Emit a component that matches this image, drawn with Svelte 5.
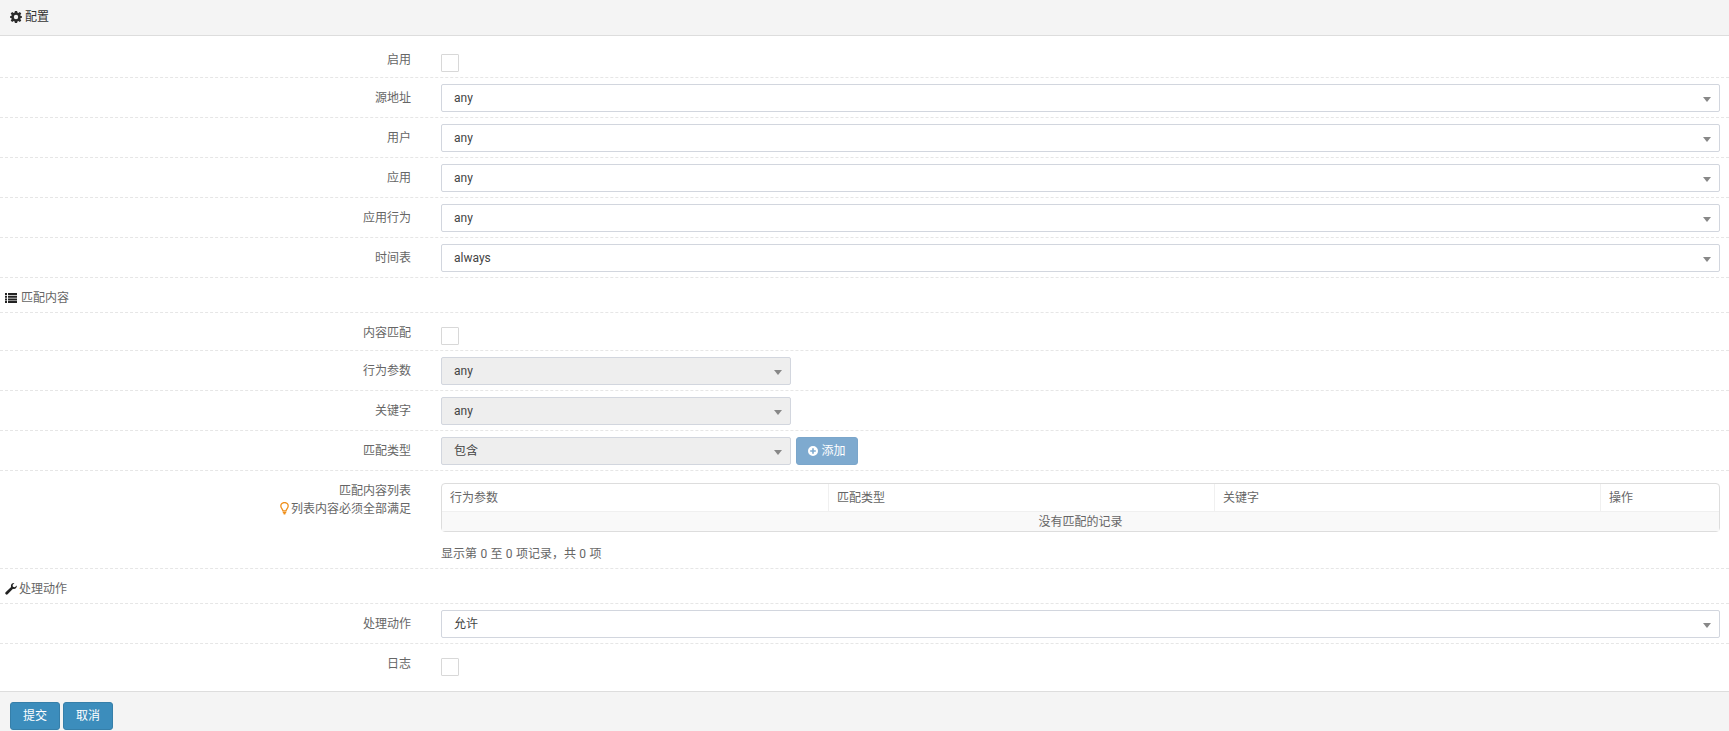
<script>
  const topFields = [
    { label: "源地址", value: "any" },
    { label: "用户", value: "any" },
    { label: "应用", value: "any" },
    { label: "应用行为", value: "any" },
    { label: "时间表", value: "always" }
  ];
  const columns = ["行为参数", "匹配类型", "关键字", "操作"];
</script>

{#snippet select(value, disabled = false, short = false)}
  <div class="select" class:disabled class:short>
    <span>{value}</span>
    <i class="arrow"></i>
  </div>
{/snippet}

<div class="page">
  <header class="head">
    <svg class="icon" viewBox="0 0 12 12" aria-hidden="true">
      <path fill="#2b2b2b" fill-rule="evenodd" d="M4.9 0h2.2l.3 1.6 1 .4L9.8 1l1.5 1.5-1 1.4.4 1 1.6.3v1.6l-1.6.3-.4 1 1 1.4-1.5 1.5-1.4-1-1 .4-.3 1.6H4.9l-.3-1.6-1-.4-1.4 1L.7 9.5l1-1.4-.4-1L0 6.8V5.2l1.3-.3.4-1-1-1.4L2.2 1l1.4 1 1-.4zM6 3.8a2.2 2.2 0 1 0 0 4.4 2.2 2.2 0 0 0 0-4.4z" />
    </svg>
    <span>配置</span>
  </header>

  <form class="body">
    <div class="row check">
      <div class="label">启用</div>
      <div class="field"><span class="checkbox"></span></div>
    </div>
    {#each topFields as f}
      <div class="row">
        <div class="label">{f.label}</div>
        <div class="field">{@render select(f.value)}</div>
      </div>
    {/each}

    <div class="section">
      <svg class="icon list" viewBox="0 0 12 10" aria-hidden="true">
        <path fill="#222" d="M0 0h2v2H0zM3 0h9v2H3zM0 2.700h2v2H0zM3 2.700h9v2H3zM0 5.400h2v2H0zM3 5.400h9v2H3zM0 8h2v2H0zM3 8h9v2H3z" />
      </svg>
      <span>匹配内容</span>
    </div>

    <div class="row check">
      <div class="label">内容匹配</div>
      <div class="field"><span class="checkbox"></span></div>
    </div>
    <div class="row">
      <div class="label">行为参数</div>
      <div class="field">{@render select("any", true, true)}</div>
    </div>
    <div class="row">
      <div class="label">关键字</div>
      <div class="field">{@render select("any", true, true)}</div>
    </div>
    <div class="row">
      <div class="label">匹配类型</div>
      <div class="field inline">
        {@render select("包含", true, true)}
        <button type="button" class="btn add">
          <svg class="plus" viewBox="0 0 10 10" aria-hidden="true">
            <path fill="#fff" fill-rule="evenodd" d="M5 0a5 5 0 1 1 0 10A5 5 0 0 1 5 0zM4.200 2.200v2H2.200v1.600h2v2h1.600v-2h2V4.200h-2v-2z" />
          </svg>添加
        </button>
      </div>
    </div>
    <div class="row table-row">
      <div class="label">
        匹配内容列表
        <div class="hint">
          <svg class="bulb" viewBox="0 0 8 12" aria-hidden="true">
            <path fill="none" stroke="#ef8f1a" stroke-width="1.200" d="M2.600 8.200C2.400 6.600.6 5.800.6 3.600a3.400 3.100 0 0 1 6.800 0c0 2.200-1.800 3-2 4.600z" />
            <path fill="#ef8f1a" d="M2.400 9h3.200v1.200l-.8.5v.9H3.200v-.9l-.8-.5z" />
          </svg>列表内容必须全部满足
        </div>
      </div>
      <div class="field">
        <table>
          <thead>
            <tr>
              {#each columns as c}
                <th>{c}</th>
              {/each}
            </tr>
          </thead>
          <tbody>
            <tr><td colspan="4">没有匹配的记录</td></tr>
          </tbody>
        </table>
        <p class="info">显示第 0 至 0 项记录，共 0 项</p>
      </div>
    </div>

    <div class="section">
      <svg class="icon wrench" viewBox="0 0 12 12" aria-hidden="true">
        <path fill="#222" d="M11.800 2.600c.3 1.600-.9 3.400-2.800 3.400-.4 0-.7 0-1-.2l-5.400 5.500c-.5.5-1.300.5-1.800 0l-.2-.2c-.5-.5-.5-1.300 0-1.800L6.100 4c-.1-.3-.2-.7-.2-1C5.900 1 7.700-.2 9.400.1L7.600 1.900l.3 1.900 1.900.4z" />
      </svg>
      <span>处理动作</span>
    </div>

    <div class="row">
      <div class="label">处理动作</div>
      <div class="field">{@render select("允许")}</div>
    </div>
    <div class="row check last">
      <div class="label">日志</div>
      <div class="field"><span class="checkbox"></span></div>
    </div>
  </form>

  <footer class="foot">
    <button type="button" class="btn">提交</button>
    <button type="button" class="btn">取消</button>
  </footer>
</div>

<style>
  :global(body) {
    background: #fff;
  }

  .page {
    font-family: Roboto, "Noto Sans CJK SC", sans-serif;
    font-size: 12px;
    line-height: 18px;
    color: #666;
    height: 731px;
    overflow: hidden;
  }

  .head {
    height: 33px;
    padding-bottom: 2px;
    background: #f4f4f4;
    border-bottom: 1px solid #ddd;
    display: flex;
    align-items: center;
    gap: 3px;
    padding-left: 10px;
    color: #333;
  }

  .icon {
    width: 12px;
    height: 12px;
    flex: none;
  }

  .body {
    padding: 4px 0 10px;
  }

  .row {
    display: grid;
    grid-template-columns: 411px 1fr;
    column-gap: 30px;
    padding-right: 9px;
    min-height: 39px;
    border-bottom: 1px dashed #e6e6e6;
  }

  .row.check {
    min-height: 37px;
  }

  .row.last {
    border-bottom: 0;
  }

  .label {
    text-align: right;
    padding-top: 11px;
  }

  .field {
    padding-top: 6px;
    padding-bottom: 5px;
  }

  .check .field {
    padding-top: 14px;
    padding-bottom: 5px;
  }

  .inline {
    display: flex;
    gap: 5px;
  }

  .checkbox {
    display: block;
    width: 16px;
    height: 16px;
    border: 1px solid #d8d8d8;
    border-radius: 1px;
  }

  .select {
    height: 26px;
    border: 1px solid #d2d6de;
    border-radius: 2px;
    display: flex;
    align-items: center;
    justify-content: space-between;
    padding: 0 8px 0 12px;
    color: #444;
    background: #fff;
  }

  .select.disabled {
    background: #eee;
  }

  .select.short {
    width: 328px;
    flex: none;
  }

  .arrow {
    width: 0;
    height: 0;
    border-left: 4px solid transparent;
    border-right: 4px solid transparent;
    border-top: 5px solid #888;
    margin-top: 2px;
  }

  .btn {
    font: inherit;
    color: #fff;
    height: 28px;
    width: 50px;
    padding: 0;
    background: #3c8dbc;
    border: 1px solid #367fa9;
    border-radius: 3px;
  }

  .btn.add {
    width: 62px;
    background: #7eaacf;
    border-color: #7ba6cb;
    display: flex;
    align-items: center;
    justify-content: center;
    gap: 3px;
  }

  .plus {
    width: 10px;
    height: 10px;
  }

  .section {
    border-bottom: 1px dashed #e6e6e6;
    padding: 11px 0 0 5px;
    box-sizing: border-box;
    height: 35px;
    display: flex;
    align-items: flex-start;
    gap: 4px;
  }

  .section .icon {
    margin-top: 3px;
  }

  .section .list {
    height: 10px;
    margin-top: 4px;
  }

  .section .wrench {
    margin-right: -2px;
  }

  .table-row .field {
    padding-top: 12px;
    padding-bottom: 0;
  }

  .bulb {
    width: 9px;
    height: 13px;
    margin-right: 2px;
    vertical-align: -2px;
  }

  table {
    width: 100%;
    table-layout: fixed;
    border-collapse: separate;
    border-spacing: 0;
    border: 1px solid #ddd;
    border-radius: 4px;
  }

  th {
    box-sizing: border-box;
    font-weight: 400;
    text-align: left;
    height: 28px;
    padding: 0 0 0 8px;
    border-bottom: 1px solid #f0f0f0;
    border-left: 1px solid #f0f0f0;
  }

  th:first-child {
    border-left: 0;
    width: 386px;
  }

  th:nth-child(2),
  th:nth-child(3) {
    width: 386px;
  }

  td {
    height: 19px;
    padding: 0;
    text-align: center;
    background: #f9f9f9;
  }

  .info {
    margin: 0;
    height: 36px;
    padding-top: 13px;
    box-sizing: border-box;
    word-spacing: 0.4px;
  }

  .foot {
    border-top: 1px solid #ddd;
    background: #f4f4f4;
    padding: 10px 0 1px 10px;
    display: flex;
    gap: 3px;
  }
</style>
